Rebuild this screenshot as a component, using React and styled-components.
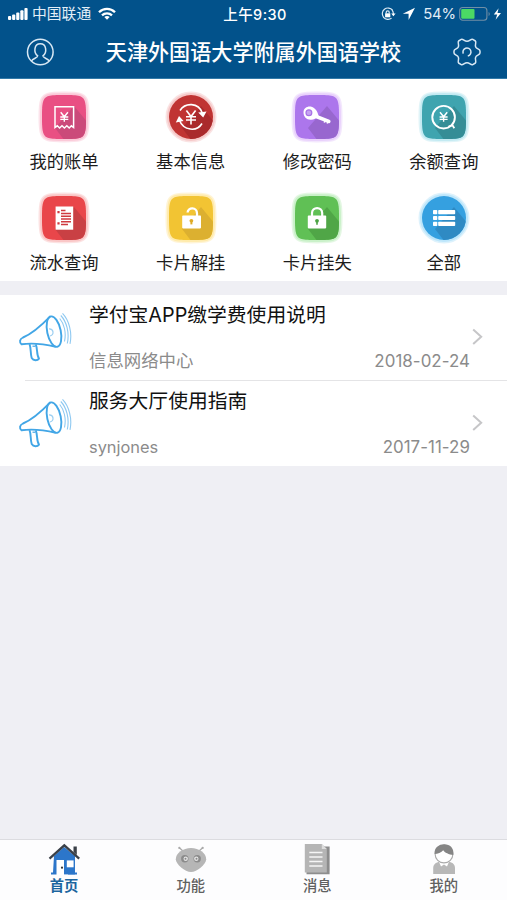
import React from "react";
import styled, { createGlobalStyle } from "styled-components";

const Global = createGlobalStyle`
  * { box-sizing: border-box; }
  body { margin: 0; background: #efeff4; font-family: Inter, "Noto Sans CJK SC", sans-serif; }
  svg { display: block; flex: none; }
`;

const Screen = styled.div`
  width: 507px;
  height: 900px;
  display: flex;
  flex-direction: column;
  background: #efeff4;
  overflow: hidden;
`;
const Header = styled.header`
  height: 79px;
  flex: none;
  background: #02528b;
  color: #fff;
  border-bottom: 1px solid #327aa9;
`;
const StatusBar = styled.div`
  height: 28px;
  display: grid;
  grid-template-columns: 1fr auto 1fr;
  align-items: center;
  padding: 0 5px 0 8px;
  font-size: 14.8px;
  line-height: 28px;
`;
const Cluster = styled.div`
  display: flex;
  align-items: center;
  justify-content: ${(p) => (p.$end ? "flex-end" : "flex-start")};
  white-space: nowrap;
  color: #e2eef7;
`;
const Carrier = styled.span`
  margin: 0 7px 0 4px;
`;
const Clock = styled.span`
  padding-top: 1px;
  font-size: 14.5px;
  font-weight: 500;
  letter-spacing: 0.4px;
  line-height: 27px;
`;
const Percent = styled.span`
  margin: 0 3px 0 8px;
  letter-spacing: -0.1px;
`;
const NavBar = styled.div`
  height: 50px;
  display: flex;
  align-items: center;
  justify-content: space-between;
  padding: 0 26px 2px 26px;
`;
const Title = styled.h1`
  margin: 0;
  padding-top: 2px;
  font-size: 21.1px;
  font-weight: 500;
  line-height: 48px;
  white-space: nowrap;
`;
const Shortcuts = styled.section`
  height: 202px;
  flex: none;
  background: #fff;
  display: grid;
  grid-template-columns: repeat(4, 126.6px);
  grid-auto-rows: 101px;
  padding: 12px 0 0 0.8px;
`;
const Shortcut = styled.div`
  display: flex;
  flex-direction: column;
  align-items: center;
`;
const ShortcutLabel = styled.span`
  margin-top: 7px;
  font-size: 17.3px;
  line-height: 24px;
  color: #1c1c1c;
`;
const NewsList = styled.section`
  margin-top: 14px;
  background: #fff;
  flex: none;
`;
const NewsRow = styled.article`
  height: 85.5px;
  display: flex;
  padding: 17px 23px 0 18px;
`;
const Divider = styled.div`
  height: 1px;
  margin: -1px 0 0 25px;
  background: #e4e4e6;
`;
const NewsBody = styled.div`
  flex: 1;
  margin: -11px 2px 0 17px;
`;
const Headline = styled.h2`
  margin: 0;
  font-size: 19.8px;
  font-weight: 400;
  line-height: 28px;
  color: #111;
  white-space: nowrap;
`;
const Meta = styled.div`
  margin-top: 19px;
  display: flex;
  justify-content: space-between;
  line-height: 26px;
  color: #8b8b8b;
`;
const Source = styled.span`
  font-size: ${(p) => (p.$latin ? "16.4px" : "17.4px")};
`;
const DateText = styled.span`
  font-size: 16.9px;
  letter-spacing: 0.05px;
`;
const ChevronBox = styled.div`
  width: 12px;
  padding-top: 16px;
`;
const TabBar = styled.nav`
  height: 61px;
  margin-top: auto;
  background: #fdfdfe;
  border-top: 1px solid #dcdce0;
  display: grid;
  grid-template-columns: repeat(4, 126.6px);
  padding-left: 0.8px;
`;
const Tab = styled.div`
  display: flex;
  flex-direction: column;
  align-items: center;
  gap: 1px;
  padding-top: 3px;
  color: ${(p) => (p.$active ? "#1c659e" : "#606060")};
  font-weight: ${(p) => (p.$active ? 700 : 500)};
  font-size: 14.3px;
  line-height: 20px;
`;

const Yen = ({ x, y }) => (
  <path
    d={`M${x - 3.6} ${y - 4.6}L${x} ${y}L${x + 3.6} ${y - 4.6}M${x} ${y}V${y + 5}M${x - 4} ${y + 0.2}H${x + 4}M${x - 4} ${y + 2.6}H${x + 4}`}
    fill="none" stroke="#fff" strokeWidth="1.4"
  />
);

const glyphs = {
  receipt: (
    <>
      <path d="M17 36.5V15.7H35.6V36.5L33.4 34.8L31.2 37L28.8 34.8L26.4 37L24 34.8L21.6 37L19.3 34.8Z" fill="none" stroke="#fff" strokeWidth="1.5" />
      <Yen x={26.3} y={25.8} />
    </>
  ),
  exchange: (
    <>
      <path d="M15 19.5C20 11.5 33.5 11 37.3 22M37 32.5C32 41 18.5 40 14.3 29" fill="none" stroke="#fff" strokeWidth="1.6" />
      <path d="M33.2 21.4L41.5 20.4L38.2 26.5ZM10.8 31.5L14 25L18.6 30Z" fill="#fff" />
      <path d="M21.4 19.6L26 25.6L30.6 19.6M26 25V33.6M21 25.8H31M21 29H31" fill="none" stroke="#fff" strokeWidth="1.6" />
    </>
  ),
  key: (
    <>
      <path d="M22 24.2L37.8 30.4" stroke="#fff" strokeWidth="3.6" strokeLinecap="round" />
      <path d="M34 29.3L33.4 31.6M37 30.5L36.2 32.5" stroke="#fff" strokeWidth="1.6" />
      <path d="M12.5 21.5C12.5 16.8 17 14.8 20.5 15.8C24 16.8 26.8 20.5 27.5 24.8C25 28 22.5 29 19.5 28.8C15.5 28.5 12.5 25.8 12.5 21.5Z" fill="#fff" />
      <circle cx="17.9" cy="21.7" r="2.9" fill="#c6a4f0" stroke="#a771e7" strokeWidth="1.2" />
    </>
  ),
  query: (
    <>
      <circle cx="25.6" cy="26.2" r="11.3" fill="none" stroke="#fff" strokeWidth="1.9" />
      <path d="M30.5 35.5L34.5 34.4L36.3 37.3" fill="none" stroke="#fff" strokeWidth="1.8" />
      <Yen x={25.6} y={25.8} />
    </>
  ),
  document: (
    <>
      <rect x="17.6" y="14.5" width="17.6" height="23.2" fill="#fff" />
      <path d="M23 18.6H27.5M23 21.4H33M23 24.2H33M23 27H33M23 29.8H33M23 32.6H30" stroke="#cf3a40" strokeWidth="1.5" />
      <path d="M19.4 20.2H21.6M19.4 31.4H21.6" stroke="#cf3a40" strokeWidth="2.2" />
    </>
  ),
  unlock: (
    <>
      <path d="M22.6 20.5C22.8 14.8 32.2 14.8 32 21.5V25" fill="none" stroke="#fff" strokeWidth="2.3" />
      <rect x="17.2" y="23.6" width="18.8" height="12.8" rx=".8" fill="#fff" />
      <ellipse cx="26.4" cy="28.8" rx="1.9" ry="1.8" fill="#dfab25" />
      <path d="M26.4 29V32.4" stroke="#dfab25" strokeWidth="2" />
    </>
  ),
  lock: (
    <>
      <path d="M21 25V21C21 14.4 31.2 14.4 31.2 21V25" fill="none" stroke="#fff" strokeWidth="2.2" />
      <rect x="16.8" y="23.6" width="18.4" height="12.8" rx=".8" fill="#fff" />
      <circle cx="26" cy="28.8" r="1.9" fill="#4ba343" />
      <path d="M26 29V32.7" stroke="#4ba343" strokeWidth="1.6" />
    </>
  ),
  list: (
    <g fill="#fff">
      <rect x="15" y="18" width="4.3" height="4.2" rx=".8" /><rect x="20.2" y="18" width="17" height="4.2" rx=".8" />
      <rect x="15" y="23.9" width="4.3" height="4.2" rx=".8" /><rect x="20.2" y="23.9" width="17" height="4.2" rx=".8" />
      <rect x="15" y="29.8" width="4.3" height="4.2" rx=".8" /><rect x="20.2" y="29.8" width="17" height="4.2" rx=".8" />
    </g>
  ),
};

const squircle = "M26 4C41.5 4 44.5 5 46.4 9.3C48 13 48 19 48 26C48 33 48 39 46.4 42.7C44.5 47 41.5 48 26 48C10.5 48 7.5 47 5.6 42.7C4 39 4 33 4 26C4 19 4 13 5.6 9.3C7.5 5 10.5 4 26 4Z";
const disc = "M26 4A22 22 0 1 1 26 48A22 22 0 1 1 26 4Z";

const TileIcon = ({ name, color, shade, glow, round }) => {
  const shape = round ? disc : squircle;
  return (
    <svg width="52" height="52" viewBox="0 0 52 52">
      <defs>
        <clipPath id={`clip-${name}`}><path d={shape} /></clipPath>
      </defs>
      <path d={shape} fill={glow} stroke={glow} strokeWidth="7" opacity=".5" />
      <path d={shape} fill={glow} stroke={glow} strokeWidth="4" />
      <path d={shape} fill={color} />
      <path d="M36 15L50 32V50H27L17 37Z" fill={shade} clipPath={`url(#clip-${name})`} />
      {glyphs[name]}
    </svg>
  );
};

const Megaphone = () => (
  <svg width="54" height="50" viewBox="0 0 54 50" fill="none" stroke="#42a6e6" strokeWidth="1.9" strokeLinejoin="round">
    <path d="M32.5 4.2C24 13 15 21.5 5 25.5C1.5 27 1.2 30.5 3.5 32.3C14 30.8 28 32.5 37.8 34.8" />
    <ellipse cx="36" cy="19.6" rx="6.8" ry="15.5" transform="rotate(-12 36 19.6)" />
    <path d="M11.5 32.2C13.3 36.5 12.2 41.5 13.7 46C15.5 49 19.5 48.8 21 46.6C18.2 42.5 19.8 37 17.8 32.3" />
    <path d="M14.5 34.2H17.5" strokeWidth="1.2" />
    <path d="M31 16.8C35.8 16.5 36.5 22.8 32 24" stroke="#9ccff1" strokeWidth="1.2" />
    <path d="M41.7 6.5C46 11.5 48.5 20.5 46.5 29.5M42.8 3.5C48.5 9.5 51.7 20.5 49.3 31.5M44.5 1.3C51 8 54.4 20.5 52 31.8" stroke="#8fc9f1" strokeWidth="1.1" />
  </svg>
);

const Chevron = () => (
  <svg width="12" height="18" viewBox="0 0 12 18" fill="none" stroke="#c6c6c8" strokeWidth="2">
    <path d="M1.2 1.5L9.2 8.8L1.2 16.1" />
  </svg>
);

const SignalIcon = () => (
  <svg width="20" height="14" viewBox="0 0 20 14" fill="#fff">
    <rect y="9" width="3.2" height="4" rx="1" /><rect x="4.1" y="7.5" width="3.2" height="5.5" rx="1" />
    <rect x="8.2" y="5.5" width="3.2" height="7.5" rx="1" /><rect x="12.3" y="3.2" width="3.2" height="9.8" rx="1" />
    <rect x="16.4" y="1" width="3.2" height="12" rx="1" />
  </svg>
);
const WifiIcon = () => (
  <svg width="18" height="14" viewBox="0 0 18 14" fill="none" stroke="#fff" strokeWidth="2.3">
    <path d="M1 5.2C5.5 .7 12.5 .7 17 5.2M4 8.3C6.8 5.6 11.2 5.6 14 8.3" />
    <path d="M9 12.8L6.3 10C7.8 8.6 10.2 8.6 11.7 10Z" fill="#fff" stroke="none" />
  </svg>
);
const RotationLockIcon = () => (
  <svg width="15" height="14" viewBox="0 0 15 14" fill="none" stroke="#dceaf5" strokeWidth="1.2">
    <path d="M11.5 3.2A5.7 5.7 0 1 0 10.6 11.1" />
    <path d="M11 3C12 4 12.4 5.3 12.4 7" />
    <path d="M10.2 6.5H14.6L12.4 9.2Z" fill="#fff" stroke="none" />
    <rect x="4.1" y="6.3" width="5.2" height="4" fill="#fff" stroke="none" />
    <path d="M5.2 6.5V5.2C5.2 3.4 8.2 3.4 8.2 5.2V6.5" />
  </svg>
);
const LocationIcon = () => (
  <svg width="19" height="14" viewBox="0 0 19 14"><path d="M19 .8L6.8 6.7H12.6V13Z" fill="#fff" /></svg>
);
const BatteryIcon = () => (
  <svg width="43" height="16" viewBox="0 0 43 16">
    <rect x=".7" y="1.5" width="27.2" height="12.8" rx="3" fill="none" stroke="#718fa6" strokeWidth="1.1" />
    <path d="M29.6 6C31.1 6.7 31.1 9.3 29.6 10Z" fill="#718fa6" />
    <rect x="2.2" y="3.1" width="13.3" height="9.6" rx="1" fill="#4bd964" />
    <path d="M39.6 2.3L34.8 8.6H38.2L36.6 13.8L42 7H38.5Z" fill="#fff" />
  </svg>
);
const ProfileIcon = () => (
  <svg width="28" height="28" viewBox="0 0 28 28" fill="none" stroke="#d8e8f4" strokeWidth="1.5">
    <circle cx="14.3" cy="14" r="12.8" />
    <path d="M5.4 23C7 20 11.7 20.2 11.7 17.8C7.3 14.5 8 5.8 14.3 5.8C20.6 5.8 21.3 14.5 16.9 17.8C16.9 20.2 21.6 20 23.2 23" />
  </svg>
);
const GearIcon = () => (
  <svg width="28" height="28" viewBox="0 0 28 28" fill="none" stroke="#d8e8f4" strokeWidth="1.5" strokeLinejoin="round">
    <path d="M8.2 1.4C10.2 .6 11.2 3.2 14 3.2C16.8 3.2 17.8 .6 19.8 1.4L22.4 3C23.8 4.5 21.4 6.6 22.8 9.2C23.6 10.9 27 11.2 27 13V15C27 16.8 23.6 17.1 22.8 18.8C21.4 21.4 23.8 23.5 22.4 25L19.8 26.6C17.8 27.4 16.8 24.8 14 24.8C11.2 24.8 10.2 27.4 8.2 26.6L5.6 25C4.2 23.5 6.6 21.4 5.2 18.8C4.4 17.1 1 16.8 1 15V13C1 11.2 4.4 10.9 5.2 9.2C6.6 6.6 4.2 4.5 5.6 3Z" />
    <path d="M10.3 15.6A4 4 0 1 1 14.8 17.9" />
  </svg>
);

const HomeIcon = () => (
  <svg width="32" height="32" viewBox="0 0 32 32">
    <path d="M6 13L16 4L27 13V29.5H29V31.4H20V17H9.5V31.4H3V29.5H5Z" fill="#2c76ca" />
    <path d="M8.5 17H16V32H8.5Z" fill="#fff" />
    <path d="M16 17H27V31.4H16Z" fill="#2c76ca" />
    <path d="M18.8 17.4H25.6V24.3H18.8Z" fill="#fff" />
    <circle cx="14" cy="24.7" r="1.1" fill="#333" />
    <path d="M1.5 15.6L16.3 2.4L31.2 15.6" fill="none" stroke="#3a4048" strokeWidth="2.3" />
    <path d="M25.5 3.5H28.8V12L25.5 9Z" fill="#3a4048" />
  </svg>
);
const RobotIcon = () => (
  <svg width="32" height="32" viewBox="0 0 32 32">
    <path d="M4.3 4.7L8.5 8.5M27.7 4.7L23.5 8.5" stroke="#aaa" strokeWidth="1.3" />
    <circle cx="4.3" cy="4.9" r="1.1" fill="#aaa" /><circle cx="27.7" cy="4.9" r="1.1" fill="#aaa" />
    <path d="M16 5C24 5 31.2 10 31.2 16.2C31.2 21 22 29 16 29C10 29 .8 21 .8 16.2C.8 10 8 5 16 5Z" fill="#b6b6b6" />
    <circle cx="9.8" cy="15.7" r="3.7" fill="#8b8b8b" /><circle cx="22.2" cy="15.7" r="3.7" fill="#8b8b8b" />
    <circle cx="10.7" cy="15.7" r="2.2" fill="#e4e4e4" /><circle cx="21.3" cy="15.7" r="2.2" fill="#e4e4e4" />
    <circle cx="10.5" cy="15.7" r="1" fill="#888" /><circle cx="21.5" cy="15.7" r="1" fill="#888" />
  </svg>
);
const MessageIcon = () => (
  <svg width="32" height="32" viewBox="0 0 32 32">
    <path d="M9 3.4H28.6V31.2H5.5V28Z" fill="#8d8d8d" />
    <path d="M3.8 1H20.8L25.8 6V29.5H3.8Z" fill="#b5b5b5" />
    <path d="M20.8 1V6H25.8Z" fill="#ddd" />
    <path d="M8.3 9.5H21.5M8.3 14H21.5M8.3 18.5H21.5M8.3 23H21.5" stroke="#f5f5f5" strokeWidth="1.5" />
  </svg>
);
const PersonIcon = () => (
  <svg width="32" height="32" viewBox="0 0 32 32">
    <path d="M5.2 31V25C5.2 20.5 9 19 12 18.4H20.3C23.4 19 27 20.5 27 25V31Z" fill="#b8b8b8" />
    <path d="M11 18.8L13 23.5L16 21.5L19 23.5L21 18.8Z" fill="#fff" />
    <circle cx="16" cy="11" r="8.9" fill="#fff" stroke="#aaa" strokeWidth="1.1" />
    <path d="M6.6 11C6 4.5 11 1.2 16.2 1.2C22 1.2 26.4 5.2 25.3 12C21 11.5 16.5 9.5 15.2 7.2C13.5 9.5 9.5 11 6.6 11Z" fill="#858585" />
  </svg>
);

const shortcuts = [
  { label: "我的账单", name: "receipt", color: "#e94f83", shade: "#cb4a7a", glow: "#fbc9d8" },
  { label: "基本信息", name: "exchange", color: "#c03433", shade: "#aa2a2c", glow: "#f6c9c9", round: true },
  { label: "修改密码", name: "key", color: "#ac76ec", shade: "#9867cf", glow: "#e9d1fc" },
  { label: "余额查询", name: "query", color: "#3fa4af", shade: "#358d96", glow: "#c3eaf2" },
  { label: "流水查询", name: "document", color: "#e9464a", shade: "#c94044", glow: "#fac7c7" },
  { label: "卡片解挂", name: "unlock", color: "#f2c433", shade: "#dcb030", glow: "#ffebad" },
  { label: "卡片挂失", name: "lock", color: "#60c055", shade: "#50a647", glow: "#caf1c9" },
  { label: "全部", name: "list", color: "#35a0e0", shade: "#2f8ac3", glow: "#bde6fb", round: true },
];
const news = [
  { title: "学付宝APP缴学费使用说明", source: "信息网络中心", date: "2018-02-24" },
  { title: "服务大厅使用指南", source: "synjones", date: "2017-11-29", latin: true },
];
const tabs = [
  { label: "首页", Icon: HomeIcon, active: true },
  { label: "功能", Icon: RobotIcon },
  { label: "消息", Icon: MessageIcon },
  { label: "我的", Icon: PersonIcon },
];

export default function App() {
  return (
    <Screen>
      <Global />
      <Header>
        <StatusBar>
          <Cluster><SignalIcon /><Carrier>中国联通</Carrier><WifiIcon /></Cluster>
          <Clock>上午9:30</Clock>
          <Cluster $end><RotationLockIcon /><LocationIcon /><Percent>54%</Percent><BatteryIcon /></Cluster>
        </StatusBar>
        <NavBar><ProfileIcon /><Title>天津外国语大学附属外国语学校</Title><GearIcon /></NavBar>
      </Header>
      <Shortcuts>
        {shortcuts.map(({ label, ...icon }) => (
          <Shortcut key={label}><TileIcon {...icon} /><ShortcutLabel>{label}</ShortcutLabel></Shortcut>
        ))}
      </Shortcuts>
      <NewsList>
        {news.map((item, i) => (
          <React.Fragment key={item.title}>
            {i > 0 && <Divider />}
            <NewsRow>
              <Megaphone />
              <NewsBody>
                <Headline>{item.title}</Headline>
                <Meta><Source $latin={item.latin}>{item.source}</Source><DateText>{item.date}</DateText></Meta>
              </NewsBody>
              <ChevronBox><Chevron /></ChevronBox>
            </NewsRow>
          </React.Fragment>
        ))}
      </NewsList>
      <TabBar>
        {tabs.map(({ label, Icon, active }) => (
          <Tab key={label} $active={active}><Icon />{label}</Tab>
        ))}
      </TabBar>
    </Screen>
  );
}
